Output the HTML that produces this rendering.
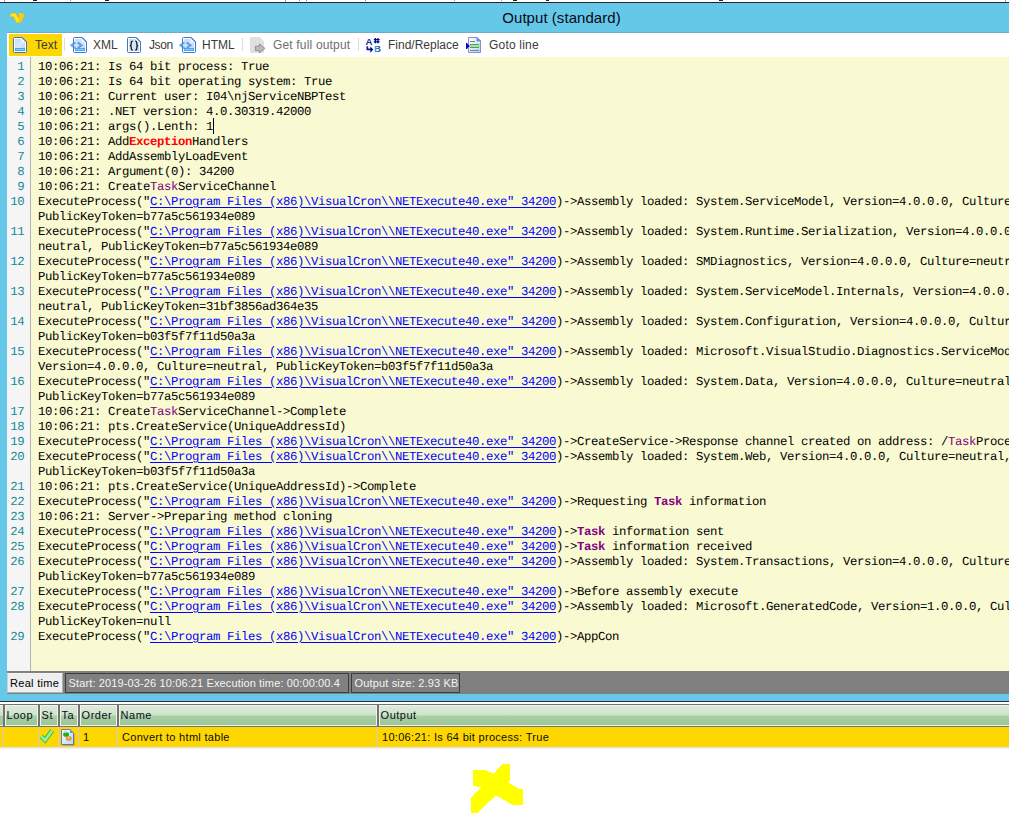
<!DOCTYPE html>
<html>
<head>
<meta charset="utf-8">
<title>Output (standard)</title>
<style>
html,body{margin:0;padding:0;}
body{width:1009px;height:813px;overflow:hidden;background:#fff;position:relative;font-family:"Liberation Sans",sans-serif;}
.abs{position:absolute;}
#topstrip{left:0;top:0;width:1009px;height:2px;background:#fff;}
#topline{left:0;top:2px;width:1009px;height:1px;background:#2a2326;}
#frame{left:0;top:3px;width:1009px;height:698px;background:#65c8e8;}
#title{left:0;top:8px;width:1123px;letter-spacing:0.05px;text-align:center;font-size:15px;line-height:20px;color:#0a0a14;white-space:nowrap;}
#toolbar{left:7px;top:32px;width:1002px;height:25px;background:#fff;border-top:1px solid #72acc9;box-sizing:border-box;}
.tb{position:absolute;top:0;height:24px;font-size:12px;line-height:16px;color:#3b3b3b;white-space:nowrap;}
.tb span{position:absolute;top:4px;}
.sep{position:absolute;top:5px;width:1px;height:13px;background:#dcdcdc;}
#btnText{left:2px;top:1px;width:53px;height:22px;background:#ffd700;}
#editor{left:7px;top:57px;width:1002px;height:614px;background:#fafad2;overflow:hidden;}
#gutter{left:0;top:0;width:23px;height:614px;background:#f5f5f5;border-right:1px solid #b2b2b2;}
#nums{left:0;top:3px;width:17.3px;text-align:right;color:#138a96;}
#nums,#code{font-family:"Liberation Mono",monospace;font-size:12.3px;letter-spacing:-0.38px;line-height:15px;white-space:pre;text-rendering:geometricPrecision;}
#code{left:31px;top:3px;color:#000;}
#code a{color:#0000ff;text-decoration:underline;text-underline-offset:1.5px;}
#code .t{color:#800080;}
#code .e{color:#ff0000;}
#code b{font-weight:bold;}
.caret{position:absolute;left:175px;top:58px;width:1px;height:16px;background:#000;}
#status{left:7px;top:671px;width:1002px;height:23px;background:#808080;}
.sp{position:absolute;top:2px;height:20px;box-sizing:border-box;font-size:11px;line-height:18px;white-space:nowrap;}
#sp1{left:0;width:56px;background:#efefef;border:1px solid #f4f4f4;border-left-color:#d0d0d0;border-bottom-color:#b0b0b0;border-right-color:#b0b0b0;color:#000;padding-left:2px;letter-spacing:0.3px;}
#sp2{left:58px;width:284px;border:1px solid #3c3c3c;color:#f4f4f4;padding-left:2.6px;letter-spacing:0.125px;}
#sp3{left:344px;width:109px;border:1px solid #3c3c3c;color:#f4f4f4;padding-left:2.5px;letter-spacing:0.15px;}
#gridtop1{left:0;top:701px;width:1009px;height:1px;background:#2f2f2f;}
#gridtop2{left:0;top:702px;width:1009px;height:2px;background:#fff;}
#ghead{left:0;top:704px;width:1009px;height:23px;background:#727272;}
.hc{position:absolute;top:1px;height:21px;box-sizing:border-box;border:1px solid #eef6ec;background:linear-gradient(#dcebd9 0%,#d0e3cc 47%,#aacfa5 53%,#9bc696 100%);font-size:11px;line-height:19px;color:#0c0c1c;padding-left:0.6px;letter-spacing:0.5px;white-space:nowrap;overflow:hidden;}
#grow{left:0;top:727px;width:1009px;height:20px;background:#ffd700;font-size:11px;line-height:20px;color:#0c0c0c;white-space:nowrap;}
#grow .vs{position:absolute;top:0;width:1px;height:20px;background:#cfcfcf;}
#grow span{position:absolute;top:0;}
#growline{left:0;top:747px;width:1009px;height:2px;background:linear-gradient(#dcdce8,#f3f3f7);}
svg{position:absolute;overflow:visible;}
</style>
</head>
<body>
<div id="topstrip" class="abs"><i style="position:absolute;left:33px;top:0;width:4px;height:1px;background:#222"></i><i style="position:absolute;left:105px;top:0;width:4px;height:1px;background:#222"></i><i style="position:absolute;left:513px;top:0;width:4px;height:1px;background:#222"></i><i style="position:absolute;left:546px;top:0;width:3px;height:1px;background:#222"></i><i style="position:absolute;left:719px;top:0;width:4px;height:1px;background:#222"></i><i style="position:absolute;left:70px;top:0;width:1px;height:1px;background:#88a"></i><i style="position:absolute;left:299px;top:0;width:1px;height:1px;background:#88a"></i><i style="position:absolute;left:306px;top:0;width:1px;height:1px;background:#88a"></i><i style="position:absolute;left:365px;top:0;width:1px;height:1px;background:#88a"></i><i style="position:absolute;left:454px;top:0;width:1px;height:1px;background:#a98"></i><i style="position:absolute;left:501px;top:0;width:1px;height:1px;background:#a98"></i><i style="position:absolute;left:4px;top:0;width:1px;height:2px;background:#aaa"></i><i style="position:absolute;left:285px;top:0;width:1px;height:2px;background:#aaa"></i><i style="position:absolute;left:1005px;top:0;width:1px;height:2px;background:#aaa"></i></div>
<div id="topline" class="abs"></div>
<div id="frame" class="abs"></div>
<svg style="left:0;top:0" width="40" height="32" viewBox="0 0 40 32">
  <polygon points="9.3,16.7 11.3,13.1 15.7,13.1 18.5,17.7 19.4,15.9 18.5,13.3 22.6,12.9 24.2,15.7 20.8,22.5 16.5,22.7 13.3,16.7" fill="#ffe812" stroke="#c89a10" stroke-width="0.6" stroke-opacity="0.6"/>
  <polygon points="18.5,13.3 22.6,12.9 24.2,15.7 20.8,22.5 18.6,22.6 18.5,17.7 19.4,15.9" fill="#ffc90a"/>
</svg>
<div id="title" class="abs">Output (standard)</div>

<div id="toolbar" class="abs">
  <div id="btnText" class="abs"></div>
  <div class="tb" style="left:0"><span style="left:28px">Text</span></div>
  <div class="sep" style="left:57px"></div>
  <div class="tb" style="left:0"><span style="left:86px">XML</span></div>
  <div class="tb" style="left:0"><span style="left:142px;letter-spacing:-0.4px">Json</span></div>
  <div class="tb" style="left:0"><span style="left:195px">HTML</span></div>
  <div class="sep" style="left:235px"></div>
  <div class="tb" style="left:0;color:#6f6f6f"><span style="left:266px;letter-spacing:0.17px">Get full output</span></div>
  <div class="sep" style="left:351px"></div>
  <div class="tb" style="left:0"><span style="left:381px">Find/Replace</span></div>
  <div class="tb" style="left:0"><span style="left:482px;letter-spacing:0.2px">Goto line</span></div>
</div>

<div id="editor" class="abs">
  <div id="gutter" class="abs"></div>
  <div id="nums" class="abs"><div>1</div><div>2</div><div>3</div><div>4</div><div>5</div><div>6</div><div>7</div><div>8</div><div>9</div><div>10</div><div>&nbsp;</div><div>11</div><div>&nbsp;</div><div>12</div><div>&nbsp;</div><div>13</div><div>&nbsp;</div><div>14</div><div>&nbsp;</div><div>15</div><div>&nbsp;</div><div>16</div><div>&nbsp;</div><div>17</div><div>18</div><div>19</div><div>20</div><div>&nbsp;</div><div>21</div><div>22</div><div>23</div><div>24</div><div>25</div><div>26</div><div>&nbsp;</div><div>27</div><div>28</div><div>&nbsp;</div><div>29</div></div>
  <div id="code" class="abs"><div>10:06:21: Is 64 bit process: True</div><div>10:06:21: Is 64 bit operating system: True</div><div>10:06:21: Current user: I04\njServiceNBPTest</div><div>10:06:21: .NET version: 4.0.30319.42000</div><div>10:06:21: args().Lenth: 1</div><div>10:06:21: Add<b class="e">Exception</b>Handlers</div><div>10:06:21: AddAssemblyLoadEvent</div><div>10:06:21: Argument(0): 34200</div><div>10:06:21: Create<span class="t">Task</span>ServiceChannel</div><div>ExecuteProcess("<a>C:\Program Files (x86)\VisualCron\\NETExecute40.exe" 34200</a>)-&gt;Assembly loaded: System.ServiceModel, Version=4.0.0.0, Culture=neutral,</div><div>PublicKeyToken=b77a5c561934e089</div><div>ExecuteProcess("<a>C:\Program Files (x86)\VisualCron\\NETExecute40.exe" 34200</a>)-&gt;Assembly loaded: System.Runtime.Serialization, Version=4.0.0.0, Culture=</div><div>neutral, PublicKeyToken=b77a5c561934e089</div><div>ExecuteProcess("<a>C:\Program Files (x86)\VisualCron\\NETExecute40.exe" 34200</a>)-&gt;Assembly loaded: SMDiagnostics, Version=4.0.0.0, Culture=neutral,</div><div>PublicKeyToken=b77a5c561934e089</div><div>ExecuteProcess("<a>C:\Program Files (x86)\VisualCron\\NETExecute40.exe" 34200</a>)-&gt;Assembly loaded: System.ServiceModel.Internals, Version=4.0.0.0, Culture=</div><div>neutral, PublicKeyToken=31bf3856ad364e35</div><div>ExecuteProcess("<a>C:\Program Files (x86)\VisualCron\\NETExecute40.exe" 34200</a>)-&gt;Assembly loaded: System.Configuration, Version=4.0.0.0, Culture=neutral,</div><div>PublicKeyToken=b03f5f7f11d50a3a</div><div>ExecuteProcess("<a>C:\Program Files (x86)\VisualCron\\NETExecute40.exe" 34200</a>)-&gt;Assembly loaded: Microsoft.VisualStudio.Diagnostics.ServiceModelSink,</div><div>Version=4.0.0.0, Culture=neutral, PublicKeyToken=b03f5f7f11d50a3a</div><div>ExecuteProcess("<a>C:\Program Files (x86)\VisualCron\\NETExecute40.exe" 34200</a>)-&gt;Assembly loaded: System.Data, Version=4.0.0.0, Culture=neutral,</div><div>PublicKeyToken=b77a5c561934e089</div><div>10:06:21: Create<span class="t">Task</span>ServiceChannel-&gt;Complete</div><div>10:06:21: pts.CreateService(UniqueAddressId)</div><div>ExecuteProcess("<a>C:\Program Files (x86)\VisualCron\\NETExecute40.exe" 34200</a>)-&gt;CreateService-&gt;Response channel created on address: /<span class="t">Task</span>Process/34200</div><div>ExecuteProcess("<a>C:\Program Files (x86)\VisualCron\\NETExecute40.exe" 34200</a>)-&gt;Assembly loaded: System.Web, Version=4.0.0.0, Culture=neutral,</div><div>PublicKeyToken=b03f5f7f11d50a3a</div><div>10:06:21: pts.CreateService(UniqueAddressId)-&gt;Complete</div><div>ExecuteProcess("<a>C:\Program Files (x86)\VisualCron\\NETExecute40.exe" 34200</a>)-&gt;Requesting <b class="t">Task</b> information</div><div>10:06:21: Server-&gt;Preparing method cloning</div><div>ExecuteProcess("<a>C:\Program Files (x86)\VisualCron\\NETExecute40.exe" 34200</a>)-&gt;<b class="t">Task</b> information sent</div><div>ExecuteProcess("<a>C:\Program Files (x86)\VisualCron\\NETExecute40.exe" 34200</a>)-&gt;<b class="t">Task</b> information received</div><div>ExecuteProcess("<a>C:\Program Files (x86)\VisualCron\\NETExecute40.exe" 34200</a>)-&gt;Assembly loaded: System.Transactions, Version=4.0.0.0, Culture=neutral,</div><div>PublicKeyToken=b77a5c561934e089</div><div>ExecuteProcess("<a>C:\Program Files (x86)\VisualCron\\NETExecute40.exe" 34200</a>)-&gt;Before assembly execute</div><div>ExecuteProcess("<a>C:\Program Files (x86)\VisualCron\\NETExecute40.exe" 34200</a>)-&gt;Assembly loaded: Microsoft.GeneratedCode, Version=1.0.0.0, Culture=neutral,</div><div>PublicKeyToken=null</div><div>ExecuteProcess("<a>C:\Program Files (x86)\VisualCron\\NETExecute40.exe" 34200</a>)-&gt;AppCon</div><i class="caret"></i></div>
</div>

<div id="status" class="abs">
  <div id="sp1" class="sp">Real time</div>
  <div id="sp2" class="sp">Start: 2019-03-26 10:06:21 Execution time: 00:00:00.4</div>
  <div id="sp3" class="sp">Output size: 2.93 KB</div>
</div>

<div id="gridtop1" class="abs"></div>
<div id="gridtop2" class="abs"></div>
<div id="ghead" class="abs">
  <div class="hc" style="left:0;width:3px;padding:0;border-left:0;border-right:0"></div>
  <div class="hc" style="left:5px;width:33px">Loop</div>
  <div class="hc" style="left:40px;width:18px">St</div>
  <div class="hc" style="left:60px;width:18px">Ta</div>
  <div class="hc" style="left:80px;width:37px">Order</div>
  <div class="hc" style="left:119px;width:258px">Name</div>
  <div class="hc" style="left:379px;width:640px">Output</div>
</div>
<div id="grow" class="abs">
  <div class="vs" style="left:3px"></div>
  <div class="vs" style="left:38px"></div>
  <div class="vs" style="left:58px"></div>
  <div class="vs" style="left:78px"></div>
  <div class="vs" style="left:117px"></div>
  <div class="vs" style="left:377px"></div>
  <span style="left:83px">1</span>
  <span style="left:122px;letter-spacing:0.3px">Convert to html table</span>
  <span style="left:382px;letter-spacing:0.3px">10:06:21: Is 64 bit process: True</span>
</div>
<div id="growline" class="abs"></div>

<svg style="left:0;top:0" width="1009" height="813" viewBox="0 0 1009 813">
  <defs>
    <linearGradient id="pg" x1="0" y1="0" x2="1" y2="1">
      <stop offset="0" stop-color="#c3dbf5"/><stop offset="0.5" stop-color="#d9e8fa"/><stop offset="1" stop-color="#b7d4f2"/>
    </linearGradient>
    <linearGradient id="bb" x1="0" y1="0" x2="1" y2="0">
      <stop offset="0" stop-color="#58b0f0"/><stop offset="1" stop-color="#0a3aa0"/>
    </linearGradient>
    <linearGradient id="tk" x1="0" y1="0" x2="1" y2="1">
      <stop offset="0" stop-color="#ffffff"/><stop offset="1" stop-color="#b4d6f8"/>
    </linearGradient>
    <g id="page">
      <path d="M1.5,0.5 H9.5 L13.5,4.5 V14.5 Q13.5,15.5 12.5,15.5 H1.5 Q0.5,15.5 0.5,14.5 V1.5 Q0.5,0.5 1.5,0.5 Z" fill="#fff" stroke="#3f76cc" stroke-width="1"/>
      <path d="M2,2 H9 V5 H12 V14 H2 Z" fill="url(#pg)"/>
      <path d="M9.2,0.8 L13.2,4.8" stroke="#5b8ee0" stroke-width="1.2" fill="none"/>
    </g>
    <g id="pagebar">
      <use href="#page"/>
      <rect x="2" y="11" width="10" height="3" fill="#46a6f4"/>
      <rect x="3" y="12" width="8" height="1" fill="#8ccbfa"/>
    </g>
  </defs>
  <!-- Text -->
  <use href="#pagebar" x="13" y="37"/>
  <!-- XML -->
  <use href="#pagebar" x="73" y="37"/>
  <g fill="none" stroke="#4a93e6" stroke-width="2.3" stroke-opacity="0.85" stroke-linejoin="miter">
    <path d="M75.3,42.4 L71.7,45.3 L75.3,48.2"/>
    <path d="M77.7,42.4 L81.3,45.3 L77.7,48.2"/>
  </g>
  <!-- Json -->
  <use href="#page" x="127" y="37"/>
  <g fill="none" stroke="#111" stroke-width="1.2">
    <path d="M132.8,41.2 Q131.2,41.2 131.2,42.8 V44.2 Q131.2,45.5 129.9,45.6 Q131.2,45.7 131.2,47 V48.6 Q131.2,50.2 132.8,50.2"/>
    <path d="M135.2,41.2 Q136.8,41.2 136.8,42.8 V44.2 Q136.8,45.5 138.1,45.6 Q136.8,45.7 136.8,47 V48.6 Q136.8,50.2 135.2,50.2"/>
  </g>
  <!-- HTML -->
  <use href="#pagebar" x="182" y="37"/>
  <g fill="none" stroke="#4a93e6" stroke-width="2.3" stroke-opacity="0.85">
    <path d="M184.3,42.4 L180.7,45.3 L184.3,48.2"/>
    <path d="M186.7,42.4 L190.3,45.3 L186.7,48.2"/>
  </g>
  <!-- Get full output (disabled) -->
  <path d="M251.5,37 H259.5 L264,41.5 V52 Q264,53 263,53 H251.5 Q250,53 250,52 V38 Q250,37 251.5,37 Z" fill="#e0e0e0"/>
  <path d="M255.4,46.2 H259.4 V44 L265,48.4 L259.4,52.8 V50.7 H255.4 Z" fill="#b9b9b9" stroke="#8c8c8c" stroke-width="0.9"/>
  <!-- Find/Replace -->
  <g font-family="Liberation Sans" font-weight="bold">
    <text x="365.6" y="44.7" font-size="9.6" fill="#0b2f9e">A</text>
    <text x="374" y="52" font-size="9.6" fill="url(#bb)">B</text>
  </g>
  <g stroke="#000a80" stroke-width="1.3" fill="none">
    <path d="M375.4,38 V43.2 M378,38 V43.2 M373.8,39.6 H379.6 M373.8,41.8 H379.6"/>
  </g>
  <path d="M367.3,46.2 V49.3 H371" stroke="#0a1f96" stroke-width="1.7" fill="none"/>
  <path d="M370.3,46.6 L373.3,49.4 L370.3,52.8 Z" fill="#000a80"/>
  <!-- Goto line -->
  <path d="M468.5,37.5 H477 L480.5,41 V52.5 H468.5 Z" fill="url(#tk)" stroke="#8a8cd0" stroke-width="1"/>
  <path d="M477,37.5 V41 H480.5 Z" fill="#4aa2f2" stroke="#7a80c8" stroke-width="0.8"/>
  <rect x="470" y="41" width="5" height="1" fill="#808080"/>
  <rect x="470" y="44" width="9" height="1" fill="#808080"/>
  <rect x="470" y="45" width="10" height="2" fill="#7dfb7d"/>
  <rect x="470" y="47" width="9" height="1" fill="#808080"/>
  <rect x="470" y="50" width="9" height="1" fill="#808080"/>
  <path d="M466,43 L467,43 L468,44.5 L470,46 L468,47.5 L467,49 L466,49 Z" fill="#0000c8"/>
  <!-- grid: check -->
  <path d="M41.2,736.4 L45.1,740.2 L52.2,730.4" fill="none" stroke="#35c445" stroke-width="4.8" stroke-linejoin="miter"/>
  <path d="M41.2,736.4 L45.1,740.2 L52.2,730.4" fill="none" stroke="#a6e9a0" stroke-width="2.6" stroke-linejoin="miter"/>
  <!-- grid: task icon -->
  <path d="M61.5,729.5 H70 L73.5,733 V744.5 H61.5 Z" fill="url(#tk)" stroke="#6a78c8" stroke-width="1"/>
  <path d="M62,745 H74 V734" fill="none" stroke="#55609a" stroke-width="0.8" stroke-opacity="0.7"/>
  <path d="M70,729.5 V733 H73.5 Z" fill="#3f9cf2"/>
  <ellipse cx="66.05" cy="734.5" rx="3" ry="2.3" fill="#22aa22"/>
  <path d="M65.2,733.2 a1.3,1.3 0 1 1 0.1,0" fill="#c8c8c8"/>
  <ellipse cx="68.85" cy="738.4" rx="2.9" ry="2.3" fill="#e89a28"/>
  <circle cx="68.6" cy="737.6" r="0.9" fill="#dbe8f8"/>
</svg>

<svg style="left:0;top:0" width="1009" height="813" viewBox="0 0 1009 813">
  <polygon fill="#ffff00" shape-rendering="crispEdges" points="472.9,770 485.2,770 493.5,773.8 502.4,763.9 509.9,763.9 509.9,780.7 508,781.2 512.5,785.4 519.1,788.8 522.9,788.8 522.9,804.7 512.2,804.7 497.1,795.8 495.3,795.8 477.8,813 471.2,813 471.2,797 481,787.1 475.1,786.3 472.9,785.7"/>
</svg>
</body>
</html>
